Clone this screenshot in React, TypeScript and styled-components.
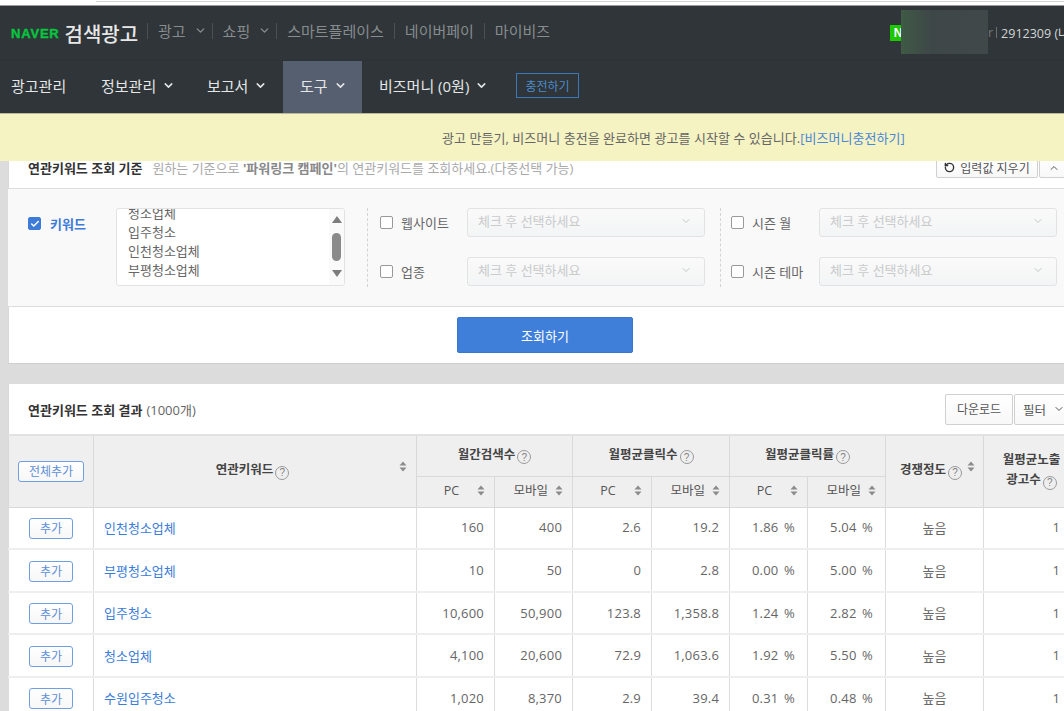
import { createGlobalStyle, styled } from "styled-components"
import { Check, ChevronDown, ChevronUp, RotateCcw } from "lucide-react"

const GlobalStyle = createGlobalStyle`
  html, body {
    margin: 0;
    height: 100%;
    overflow: hidden;
    background: #dcdcdc;
  }
  body {
    font-family: "Open Sans", "Noto Sans CJK KR", sans-serif;
    font-size: 13px;
    color: #555;
  }
  * {
    box-sizing: border-box;
  }
`

// 상단 영역
const Page = styled.div`
  width: 1064px;
  height: 711px;
  overflow: hidden;
`

const BrowserEdge = styled.div`
  height: 6px;
  background: #fff;
  border-bottom: 1px solid #9a9c9d;
  padding-left: 96px;
`

const AddressLine = styled.div`
  height: 2px;
  border-bottom: 1px solid #d4d4d4;
`

const TopBar = styled.div`
  height: 54px;
  background: #2f3538;
  display: flex;
  align-items: center;
  padding-left: 11px;
`

const Logo = styled.div`
  display: flex;
  align-items: center;
  gap: 5px;
  width: 136px;
`

const NaverMark = styled.span`
  font-family: "Liberation Sans", sans-serif;
  font-weight: 700;
  font-size: 13px;
  color: #07c43f;
  letter-spacing: 0.8px;
  -webkit-text-stroke: 0.4px #07c43f;
`

const ServiceName = styled.span`
  font-size: 20px;
  font-weight: 500;
  color: #e8e8e8;
  white-space: nowrap;
`

const TopLinks = styled.div`
  display: flex;
  align-items: center;
  flex: 1;
  margin-bottom: 5px;
`

const TopLink = styled.span<{ $menu?: boolean }>`
  display: flex;
  align-items: center;
  gap: 8px;
  height: 16px;
  padding: 0 ${(p) => (p.$menu ? "5px" : "10px")} 0 10px;
  color: #878c8f;
  font-size: 15px;
  white-space: nowrap;
  border-left: 1px solid #4a5053;
`

const Account = styled.div`
  position: relative;
  width: 174px;
  flex-shrink: 0;
  display: flex;
  align-items: center;
  height: 44px;
  margin-bottom: 2px;
  overflow: hidden;
  color: #d4d6d7;
  font-size: 12.5px;
  white-space: nowrap;
`

const NaverBadge = styled.span`
  width: 16px;
  height: 16px;
  margin-top: 2px;
  flex-shrink: 0;
  background: #1ec800;
  color: #fff;
  font: 700 12px "Liberation Sans", sans-serif;
  display: flex;
  align-items: center;
  justify-content: center;
`

const AccountName = styled.span`
  margin-left: 82px;
  color: #777;
`

const AccountId = styled.span`
  margin-left: 3px;
  padding-left: 5px;
  position: relative;
  &::before {
    content: "";
    position: absolute;
    left: 0;
    top: 4px;
    height: 11px;
    border-left: 1px solid #6a6f72;
  }
`

const Redaction = styled.div`
  position: absolute;
  left: 11px;
  top: 0;
  width: 87px;
  height: 44px;
  background: linear-gradient(90deg, #3f5a45 0%, #3e4748 35%, #41484a 100%);
`

const NavBar = styled.nav`
  height: 53px;
  background: #2f3538;
  border-top: 1px solid #2c3235;
  display: flex;
  align-items: stretch;
  padding-left: 11px;
`

const NavItem = styled.div<{ $active?: boolean; $width: number; $indent?: boolean }>`
  display: flex;
  align-items: center;
  gap: 6px;
  width: ${(p) => p.$width}px;
  flex-shrink: 0;
  padding-bottom: 4px;
  padding-left: ${(p) => (p.$indent ? "17px" : "0")};
  color: #e4e6e7;
  font-size: 15px;
  white-space: nowrap;
  background: ${(p) => (p.$active ? "#565f6f" : "transparent")};
`

const ChargeButton = styled.button`
  align-self: center;
  width: 63px;
  height: 25px;
  margin-bottom: 3px;
  padding: 0;
  background: transparent;
  border: 1px solid #3a78b8;
  color: #4c8bca;
  font-family: inherit;
  font-size: 12px;
`

const Notice = styled.div`
  position: relative;
  z-index: 2;
  height: 48px;
  background: #f5f3c2;
  border-top: 1px solid #b9b99a;
  padding-left: 442px;
  display: flex;
  align-items: center;
  color: #666;
  font-size: 13px;
  letter-spacing: 0.04px;
  white-space: nowrap;
`

const NoticeLink = styled.span`
  color: #4a86d8;
`

// 패널 공통
const Panel = styled.section`
  width: 1100px;
  margin-left: 8px;
  background: #fff;
  border-bottom: 1px solid #cfcfcf;
  box-shadow: inset 1px 0 0 #d8d8d8;
`

const CriteriaPanel = styled(Panel)`
  margin-top: -14px;
`

const PanelHead = styled.div<{ $height: number }>`
  height: ${(p) => p.$height}px;
  display: flex;
  align-items: center;
  padding-left: 20px;
  position: relative;
  white-space: nowrap;
`

const PanelTitle = styled.strong`
  font-size: 13px;
  font-weight: 700;
  color: #333;
`

const PanelHint = styled.span`
  margin-left: 10px;
  font-size: 13px;
  color: #aaa;
  b {
    color: #888;
  }
`

const HeadCount = styled.span`
  margin-left: 4px;
  color: #666;
  font-size: 13px;
`

const HeadActions = styled.div<{ $left: number }>`
  position: absolute;
  left: ${(p) => p.$left}px;
  display: flex;
  gap: 1px;
`

const GhostButton = styled.button<{ $width: number; $height: number }>`
  width: ${(p) => p.$width}px;
  height: ${(p) => p.$height}px;
  padding: 0;
  display: flex;
  align-items: center;
  justify-content: center;
  gap: 5px;
  background: linear-gradient(#fff, #f8f8f8);
  border: 1px solid #d0d0d0;
  border-radius: 2px;
  color: #555;
  font-family: inherit;
  font-size: 12px;
  white-space: nowrap;
`

const DropButton = styled(GhostButton)`
  justify-content: flex-start;
  padding-left: 8px;
  gap: 7px;
  font-size: 12.5px;
`

const FormArea = styled.div`
  height: 119px;
  background: #f9f9f9;
  border-top: 1px solid #ddd;
  border-bottom: 1px solid #ddd;
  padding: 19px 0 19px 20px;
  display: flex;
`

const KeywordField = styled.div`
  width: 339px;
  flex-shrink: 0;
  display: flex;
`

const KeywordLabel = styled.label`
  display: flex;
  align-items: flex-start;
  gap: 9px;
  width: 88px;
  padding-top: 6px;
  color: #3d7bd9;
  font-weight: 700;
  font-size: 13px;
`

const CheckBox = styled.span<{ $checked?: boolean }>`
  width: 13px;
  height: 13px;
  margin-top: 3px;
  flex-shrink: 0;
  border-radius: 2px;
  border: 1px solid ${(p) => (p.$checked ? "#3d7bd9" : "#999")};
  background: ${(p) => (p.$checked ? "#3d7bd9" : "#fff")};
  display: flex;
  align-items: center;
  justify-content: center;
  color: #fff;
`

const KeywordList = styled.div`
  position: relative;
  width: 229px;
  height: 78px;
  background: #fff;
  border: 1px solid #e2e3e5;
  border-radius: 3px;
  overflow: hidden;
  padding-left: 11px;
  color: #666;
  line-height: 19px;
  font-size: 13px;
`

const KeywordLines = styled.div`
  margin-top: -5px;
`

const ScrollTrack = styled.div`
  position: absolute;
  right: 0;
  top: 0;
  bottom: 0;
  width: 15px;
  background: #fafafa;
  display: flex;
  flex-direction: column;
  align-items: center;
  justify-content: space-between;
  padding: 7px 0 8px;
`

const ScrollArrow = styled.span<{ $up?: boolean }>`
  width: 0;
  height: 0;
  border-left: 5px solid transparent;
  border-right: 5px solid transparent;
  ${(p) => (p.$up ? "border-bottom" : "border-top")}: 7px solid #7d7d7d;
`

const ScrollThumb = styled.span`
  width: 9px;
  height: 28px;
  border-radius: 5px;
  background: #8a8a8a;
`

const FilterColumn = styled.div<{ $width: number; $pad: number }>`
  width: ${(p) => p.$width}px;
  flex-shrink: 0;
  border-left: 1px dashed #d4d4d4;
  padding-left: ${(p) => p.$pad}px;
  display: flex;
  flex-direction: column;
  gap: 20px;
`

const FilterRow = styled.div<{ $label: number }>`
  display: grid;
  grid-template-columns: ${(p) => p.$label}px 238px;
  align-items: start;
`

const FilterLabel = styled.label`
  display: flex;
  gap: 8px;
  padding-top: 5px;
  color: #666;
  font-size: 13px;
  white-space: nowrap;
`

const FakeSelect = styled.div`
  height: 29px;
  border: 1px solid #e2e3e5;
  border-radius: 3px;
  background: linear-gradient(#fafafa, #f3f4f5);
  display: flex;
  align-items: center;
  justify-content: space-between;
  padding: 0 12px 4px 10px;
  color: #c9cbcd;
  font-size: 13px;
`

const SearchRow = styled.div`
  height: 56px;
  display: flex;
  align-items: flex-start;
  padding: 10px 0 0 449px;
`

const SearchButton = styled.button`
  width: 176px;
  height: 36px;
  background: #3f7fd9;
  border: 1px solid #3a76cb;
  border-radius: 2px;
  color: #fff;
  font-family: inherit;
  font-size: 13px;
`

const ResultPanel = styled(Panel)`
  margin-top: 20px;
`

// 결과 테이블
const ResultTable = styled.table`
  table-layout: fixed;
  border-collapse: collapse;
  width: 1075px;
`

const HeadCell = styled.th<{ $height?: number }>`
  position: relative;
  height: ${(p) => p.$height ?? 31}px;
  padding: 0 0 2px;
  background: #efefef;
  border: 1px solid #d9d9d9;
  border-top: 2px solid #e2e2e2;
  color: #444;
  font-size: 12.5px;
  font-weight: 700;
  line-height: 20px;
  text-align: center;
  white-space: nowrap;
`

const KeywordHead = styled(HeadCell)`
  padding-right: 5px;
`

const CompeteHead = styled(HeadCell)`
  padding-left: 6px;
`

const ExposureHead = styled(HeadCell)`
  padding-right: 4px;
`

const SubHeadCell = styled(HeadCell)`
  border-top: 1px solid #d9d9d9;
  font-weight: 400;
  color: #555;
`

const SubHeadInner = styled.div`
  display: flex;
  align-items: center;
  justify-content: space-between;
  padding: 0 9px 0 0;
`

const SubHeadName = styled.span<{ $pc?: boolean }>`
  flex: 1;
  text-align: ${(p) => (p.$pc ? "center" : "right")};
  padding: ${(p) => (p.$pc ? "0 0 0 9px" : "0 7px 0 0")};
`

const BodyRow = styled.tr`
  &:nth-child(odd) td {
    height: 42px;
  }
  &:nth-child(even) td {
    height: 43px;
  }
`

const Cell = styled.td<{ $align?: string; $pad?: number; $rate?: boolean }>`
  padding: 0 ${(p) => p.$pad ?? 10}px 1px;
  border-left: 1px solid #dcdcdc;
  border-right: 1px solid #dcdcdc;
  border-bottom: 2px solid #eee;
  color: #666;
  font-size: 13px;
  letter-spacing: 0.2px;
  word-spacing: ${(p) => (p.$rate ? "2px" : "0")};
  text-align: ${(p) => p.$align ?? "right"};
  white-space: nowrap;
`

const KeywordLink = styled.a`
  color: #3b7dd8;
  letter-spacing: 0;
`

const AddButton = styled.button<{ $width: number; $height: number }>`
  width: ${(p) => p.$width}px;
  height: ${(p) => p.$height}px;
  margin-top: 2px;
  padding: 0;
  background: linear-gradient(#fff, #f7f7f7);
  border: 1px solid #6f9fe0;
  border-radius: 3px;
  color: #5d8ed6;
  font-family: inherit;
  font-size: 12px;
`

const HelpMark = styled.span`
  display: inline-flex;
  align-items: center;
  justify-content: center;
  width: 14px;
  height: 14px;
  margin-left: 2px;
  vertical-align: -2px;
  border: 1px solid #9a9a9a;
  border-radius: 50%;
  color: #808080;
  font: 400 10px "Liberation Sans", sans-serif;
`

const SortSlot = styled.span`
  position: absolute;
  right: 9px;
  top: 25px;
  display: flex;
`

const SortBeside = styled.span`
  display: inline-flex;
  margin-left: 5px;
  vertical-align: 2px;
`

const Sort = () => (
  <svg width="8" height="11" viewBox="0 0 8 11" fill="#8b8b8b">
    <path d="M4 0.5 7.5 4.5H0.5Z" />
    <path d="M4 10.5 0.5 6.5H7.5Z" />
  </svg>
)

const Help = () => <HelpMark>?</HelpMark>

const keywords = ["청소업체", "입주청소", "인천청소업체", "부평청소업체"]

const rows = [
  ["인천청소업체", "160", "400", "2.6", "19.2", "1.86 %", "5.04 %"],
  ["부평청소업체", "10", "50", "0", "2.8", "0.00 %", "5.00 %"],
  ["입주청소", "10,600", "50,900", "123.8", "1,358.8", "1.24 %", "2.82 %"],
  ["청소업체", "4,100", "20,600", "72.9", "1,063.6", "1.92 %", "5.50 %"],
  ["수원입주청소", "1,020", "8,370", "2.9", "39.4", "0.31 %", "0.48 %"],
]

const colWidths = [85, 323, 78, 78, 79, 78, 78, 78, 98, 100]

const Filter = ({ label, width }: { label: string; width: number }) => (
  <FilterRow $label={width}>
    <FilterLabel>
      <CheckBox />
      {label}
    </FilterLabel>
    <FakeSelect>
      체크 후 선택하세요
      <ChevronDown size={12} color="#c4c6c8" />
    </FakeSelect>
  </FilterRow>
)

export default function App() {
  return (
    <Page>
      <GlobalStyle />
      <BrowserEdge>
        <AddressLine />
      </BrowserEdge>

      <TopBar>
        <Logo>
          <NaverMark>NAVER</NaverMark>
          <ServiceName>검색광고</ServiceName>
        </Logo>
        <TopLinks>
          <TopLink $menu>
            광고 <ChevronDown size={13} strokeWidth={2.5} />
          </TopLink>
          <TopLink $menu>
            쇼핑 <ChevronDown size={13} strokeWidth={2.5} />
          </TopLink>
          <TopLink>스마트플레이스</TopLink>
          <TopLink>네이버페이</TopLink>
          <TopLink>마이비즈</TopLink>
        </TopLinks>
        <Account>
          <NaverBadge>N</NaverBadge>
          <AccountName>r</AccountName>
          <AccountId>2912309 (나</AccountId>
          <Redaction />
        </Account>
      </TopBar>

      <NavBar>
        <NavItem $width={90}>광고관리</NavItem>
        <NavItem $width={106}>
          정보관리 <ChevronDown size={13} strokeWidth={2.8} />
        </NavItem>
        <NavItem $width={76}>
          보고서 <ChevronDown size={13} strokeWidth={2.8} />
        </NavItem>
        <NavItem $active $indent $width={79}>
          도구 <ChevronDown size={13} strokeWidth={2.8} />
        </NavItem>
        <NavItem $indent $width={154}>
          비즈머니 (0원) <ChevronDown size={13} strokeWidth={2.8} />
        </NavItem>
        <ChargeButton>충전하기</ChargeButton>
      </NavBar>

      <Notice>
        광고 만들기, 비즈머니 충전을 완료하면 광고를 시작할 수 있습니다.
        <NoticeLink>[비즈머니충전하기]</NoticeLink>
      </Notice>

      <CriteriaPanel>
        <PanelHead $height={41}>
          <PanelTitle>연관키워드 조회 기준</PanelTitle>
          <PanelHint>
            원하는 기준으로 <b>'파워링크 캠페인'</b>의 연관키워드를 조회하세요.(다중선택 가능)
          </PanelHint>
          <HeadActions $left={928}>
            <GhostButton $width={102} $height={21}>
              <RotateCcw size={11} strokeWidth={3} color="#333" />
              입력값 지우기
            </GhostButton>
            <GhostButton $width={30} $height={21}>
              <ChevronUp size={12} />
            </GhostButton>
          </HeadActions>
        </PanelHead>

        <FormArea>
          <KeywordField>
            <KeywordLabel>
              <CheckBox $checked>
                <Check size={10} strokeWidth={3.5} />
              </CheckBox>
              키워드
            </KeywordLabel>
            <KeywordList>
              <KeywordLines>
                {keywords.map((word) => (
                  <div key={word}>{word}</div>
                ))}
              </KeywordLines>
              <ScrollTrack>
                <ScrollArrow $up />
                <ScrollThumb />
                <ScrollArrow />
              </ScrollTrack>
            </KeywordList>
          </KeywordField>
          <FilterColumn $width={353} $pad={12}>
            <Filter label="웹사이트" width={87} />
            <Filter label="업종" width={87} />
          </FilterColumn>
          <FilterColumn $width={360} $pad={10}>
            <Filter label="시즌 월" width={88} />
            <Filter label="시즌 테마" width={88} />
          </FilterColumn>
        </FormArea>

        <SearchRow>
          <SearchButton>조회하기</SearchButton>
        </SearchRow>
      </CriteriaPanel>

      <ResultPanel>
        <PanelHead $height={50}>
          <PanelTitle>연관키워드 조회 결과</PanelTitle>
          <HeadCount>(1000개)</HeadCount>
          <HeadActions $left={937}>
            <GhostButton $width={68} $height={31}>
              다운로드
            </GhostButton>
            <DropButton $width={60} $height={31}>
              필터 <ChevronDown size={12} />
            </DropButton>
          </HeadActions>
        </PanelHead>

        <ResultTable>
          <colgroup>
            {colWidths.map((w, i) => (
              <col key={i} width={w} />
            ))}
          </colgroup>
          <thead>
            <tr>
              <HeadCell rowSpan={2}>
                <AddButton $width={66} $height={21}>
                  전체추가
                </AddButton>
              </HeadCell>
              <KeywordHead rowSpan={2}>
                연관키워드
                <Help />
                <SortSlot>
                  <Sort />
                </SortSlot>
              </KeywordHead>
              <HeadCell colSpan={2} $height={41}>
                월간검색수
                <Help />
              </HeadCell>
              <HeadCell colSpan={2} $height={41}>
                월평균클릭수
                <Help />
              </HeadCell>
              <HeadCell colSpan={2} $height={41}>
                월평균클릭률
                <Help />
              </HeadCell>
              <CompeteHead rowSpan={2}>
                경쟁정도
                <Help />
                <SortBeside>
                  <Sort />
                </SortBeside>
              </CompeteHead>
              <ExposureHead rowSpan={2}>
                월평균노출
                <br />
                광고수
                <Help />
              </ExposureHead>
            </tr>
            <tr>
              {["PC", "모바일", "PC", "모바일", "PC", "모바일"].map((name, i) => (
                <SubHeadCell key={i}>
                  <SubHeadInner>
                    <SubHeadName $pc={name === "PC"}>{name}</SubHeadName>
                    <Sort />
                  </SubHeadInner>
                </SubHeadCell>
              ))}
            </tr>
          </thead>
          <tbody>
            {rows.map((row) => (
              <BodyRow key={row[0]}>
                <Cell $align="center" $pad={0}>
                  <AddButton $width={44} $height={21}>
                    추가
                  </AddButton>
                </Cell>
                <Cell $align="left">
                  <KeywordLink>{row[0]}</KeywordLink>
                </Cell>
                {row.slice(1).map((value, i) => (
                  <Cell key={i} $rate={i >= 4} $pad={i >= 4 ? 12 : 10}>
                    {value}
                  </Cell>
                ))}
                <Cell $align="center">높음</Cell>
                <Cell $pad={23}>1</Cell>
              </BodyRow>
            ))}
          </tbody>
        </ResultTable>
      </ResultPanel>
    </Page>
  )
}
